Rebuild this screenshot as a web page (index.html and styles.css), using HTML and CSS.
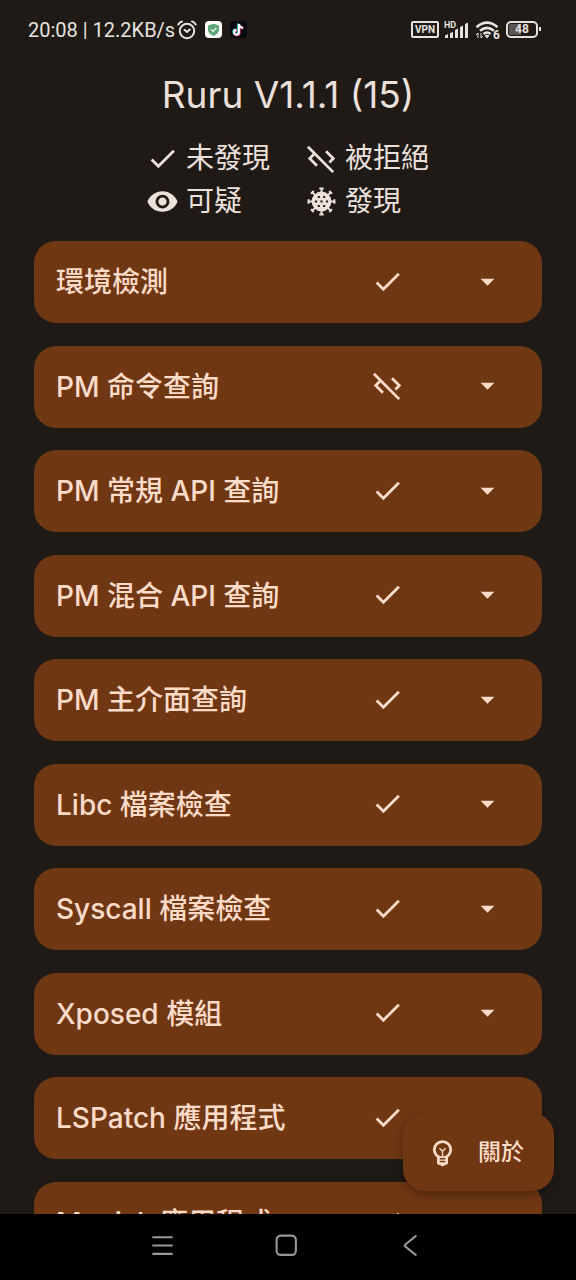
FILE: index.html
```html
<!DOCTYPE html>
<html lang="zh-Hant">
<head>
<meta charset="utf-8">
<meta name="viewport" content="width=device-width, initial-scale=1">
<title>Ruru</title>
<link rel="stylesheet" href="styles.css">
</head>
<body>
<svg class="sprite" aria-hidden="true">
  <symbol id="check" viewBox="0 0 24 24"><path d="M9 16.17 4.83 12l-1.42 1.41L9 19 21 7l-1.41-1.41z"/></symbol>
  <symbol id="code-off" viewBox="0 0 24 24"><path d="M19.17 12l-4.58-4.59L16 6l6 6-3.59 3.59L17 14.17zM1.39 4.22l4.19 4.19L2 12l6 6 1.41-1.41L4.83 12 7 9.83l12.78 12.78 1.41-1.41L2.81 2.81z"/></symbol>
  <symbol id="eye" viewBox="0 0 24 24"><path d="M12 4.5C7 4.5 2.73 7.61 1 12c1.73 4.39 6 7.5 11 7.5s9.27-3.11 11-7.5c-1.73-4.39-6-7.5-11-7.5zM12 17c-2.76 0-5-2.24-5-5s2.24-5 5-5 5 2.24 5 5-2.24 5-5 5zm0-8c-1.66 0-3 1.34-3 3s1.34 3 3 3 3-1.34 3-3-1.34-3-3-3z"/></symbol>
  <symbol id="virus" viewBox="0 0 24 24">
    <g fill="none" stroke="currentColor" stroke-width="1.5">
      <path d="M12 7V2.6M10.4 2.6h3.2M12 17v4.4M10.4 21.4h3.2M7 12H2.6M2.6 10.4v3.2M17 12h4.4M21.4 10.4v3.2"/>
      <path d="M12 7V2.6M10.6 2.6h2.8M12 17v4.4M10.6 21.4h2.8M7 12H2.6M2.6 10.6v2.8M17 12h4.4M21.4 10.6v2.8" transform="rotate(45 12 12)"/>
    </g>
    <path fill-rule="evenodd" d="M12 4.8a7.2 7.2 0 1 0 0 14.4a7.2 7.2 0 0 0 0-14.4zM9.3 8h1.500v1.500H9.300zM13.200 8h1.500v1.500h-1.500zM7.200 11.200h1.600v1.600H7.200zM11.200 11.200h1.600v1.600h-1.600zM15.200 11.200h1.600v1.600h-1.600zM9.300 14.500h1.500V16H9.300zM13.200 14.500h1.500V16h-1.500z"/>
  </symbol>
  <symbol id="arrow" viewBox="0 0 24 24"><path d="m7 10 5 5 5-5z"/></symbol>
</svg>
<div class="screen">
  <header class="status">
    <span class="status-text">20:08 | 12.2KB/s</span>
    <svg class="ic-alarm" viewBox="0 0 20 20" fill="none" stroke="currentColor" stroke-width="2" stroke-linecap="round"><circle cx="10" cy="11" r="7.200"/><path d="M1.300 4.500Q2.500 2 5 1.500M18.700 4.500Q17.500 2 15 1.500M7.500 9.800 10 12l2.800-2.500"/></svg>
    <svg class="ic-app" viewBox="0 0 17 17"><rect width="17" height="17" rx="4" fill="#fff"/><path d="M8.500 2.800 14 4.500v4q0 4-5.500 6.500Q3 12.500 3 8.500v-4z" fill="#5fa777"/><path d="m6 8.300 2 2 3.300-3.500" fill="none" stroke="#fff" stroke-width="1.200"/></svg>
    <svg class="ic-app" viewBox="0 0 17 17"><rect width="17" height="17" rx="4" fill="#080a12"/><g fill="none" stroke-width="2"><path d="M8.200 2.500v8.300a2.400 2.400 0 1 1-2.400-2.400M8.200 3q.8 3.200 4 3.300" stroke="#35dbe0"/><path d="M9.600 3.500v8.300a2.400 2.400 0 1 1-2.400-2.400M9.600 4q.8 3.200 4 3.300" stroke="#f03565"/><path d="M8.900 3v8.300a2.400 2.400 0 1 1-2.400-2.400M8.900 3.500q.8 3.200 4 3.300" stroke="#fff"/></g></svg>
    <div class="status-right">
      <span class="vpn">VPN</span>
      <svg class="ic-signal" viewBox="0 0 26 20" fill="currentColor"><text class="tag" x="0" y="8">HD</text><path d="M1 15.500l3-1.500v4H1zM6 13l3-1v6H6zM11 10l3-1.500V18h-3zM16 7l3-1.500V18h-3zM21 4l3-1.500V18h-3z"/></svg>
      <svg class="ic-wifi" viewBox="0 0 26 20" fill="none" stroke="currentColor" stroke-width="2.600"><path d="M1.500 7.200Q12 -1.800 22.500 7.200M5 10.800q7-6 14 0M8.500 14q3.500-3 7 0"/><path d="m12 18.500-2.500-3q2.500-1.600 5 0z" fill="currentColor" stroke="none"/><path d="M3 13v5M1 15l2-2M6 18v-5M8 16l-2 2" stroke-width="1"/><text class="six" x="18" y="19" fill="currentColor" stroke="none">6</text></svg>
      <span class="battery"><span class="battery-level">48</span></span>
    </div>
  </header>
  <main class="content">
    <h1 class="title">Ruru V1.1.1 (15)</h1>
    <ul class="legend">
      <li class="legend-item"><svg class="icon"><use href="#check"/></svg>未發現</li>
      <li class="legend-item"><svg class="icon"><use href="#code-off"/></svg>被拒絕</li>
      <li class="legend-item"><svg class="icon"><use href="#eye"/></svg>可疑</li>
      <li class="legend-item"><svg class="icon"><use href="#virus"/></svg>發現</li>
    </ul>
    <div class="list">
      <button class="card"><span>環境檢測</span><svg class="icon"><use href="#check"/></svg><svg class="icon"><use href="#arrow"/></svg></button>
      <button class="card"><span>PM 命令查詢</span><svg class="icon"><use href="#code-off"/></svg><svg class="icon"><use href="#arrow"/></svg></button>
      <button class="card"><span>PM 常規 API 查詢</span><svg class="icon"><use href="#check"/></svg><svg class="icon"><use href="#arrow"/></svg></button>
      <button class="card"><span>PM 混合 API 查詢</span><svg class="icon"><use href="#check"/></svg><svg class="icon"><use href="#arrow"/></svg></button>
      <button class="card"><span>PM 主介面查詢</span><svg class="icon"><use href="#check"/></svg><svg class="icon"><use href="#arrow"/></svg></button>
      <button class="card"><span>Libc 檔案檢查</span><svg class="icon"><use href="#check"/></svg><svg class="icon"><use href="#arrow"/></svg></button>
      <button class="card"><span>Syscall 檔案檢查</span><svg class="icon"><use href="#check"/></svg><svg class="icon"><use href="#arrow"/></svg></button>
      <button class="card"><span>Xposed 模組</span><svg class="icon"><use href="#check"/></svg><svg class="icon"><use href="#arrow"/></svg></button>
      <button class="card"><span>LSPatch 應用程式</span><svg class="icon"><use href="#check"/></svg></button>
      <button class="card"><span>Magisk 應用程式</span><svg class="icon"><use href="#check"/></svg></button>
    </div>
    <button class="fab">
      <svg class="icon" viewBox="0 0 24 24"><circle cx="12" cy="10" r="6" fill="none" stroke="currentColor" stroke-width="2"/><path d="M8 15h8v4a2 2 0 0 1-2 2h-.280a2 2 0 0 1-3.440 0H10a2 2 0 0 1-2-2z"/><path class="bulb-gap" d="M10 16h4v1h-4zM10 18h4v1h-4z"/><path d="M12 15v-4.200M9.800 8.900l2.200 2.200 2.200-2.200" fill="none" stroke="currentColor"/></svg>
      <span>關於</span>
    </button>
  </main>
  <nav class="nav">
    <button class="nav-button" aria-label="選單"><svg class="nav-icon" viewBox="0 0 24 24"><path d="M3 4h18M3 12h18M3 20h18"/></svg></button>
    <button class="nav-button" aria-label="主畫面"><svg class="nav-icon" viewBox="0 0 24 24"><rect x="2.500" y="2.500" width="18.500" height="18.500" rx="4"/></svg></button>
    <button class="nav-button" aria-label="返回"><svg class="nav-icon" viewBox="0 0 24 24"><path d="m17 3-10 8q-1.200 1 0 2l10 8"/></svg></button>
  </nav>
</div>
</body>
</html>
```
FILE: styles.css
```css
* { box-sizing: border-box; }
body {
  margin: 0;
  background: #201a17;
  color: #ece0db;
  font-family: Inter, "Noto Sans CJK TC", sans-serif;
}
button {
  border: 0;
  font: inherit;
  cursor: pointer;
}
.sprite { display: none; }
.screen {
  display: flex;
  flex-direction: column;
  height: 100vh;
}
.icon {
  width: 33px;
  height: 33px;
  flex: none;
  fill: currentColor;
}

.status {
  flex: none;
  display: flex;
  align-items: center;
  height: 59px;
  padding: 0 38px 0 28px;
  color: #e6e2df;
}
.status-text {
  font-family: Roboto, sans-serif;
  font-size: 20px;
}
.ic-alarm {
  width: 20px;
  height: 20px;
  margin: 0 8px 0 2px;
}
.ic-app {
  width: 17px;
  height: 17px;
  margin-right: 8px;
}
.status-right {
  display: flex;
  align-items: center;
  gap: 5px;
  margin-left: auto;
}
.vpn {
  padding: 0 2px;
  border: 2px solid;
  border-radius: 2px;
  font: bold 10px/13px Roboto, sans-serif;
}
.ic-signal, .ic-wifi {
  width: 26px;
  height: 20px;
  overflow: visible;
}
.tag { font: bold 9px Roboto, sans-serif; }
.six { font: bold 12px Roboto, sans-serif; }
.battery {
  position: relative;
  width: 32px;
  padding: 1px;
  border: 2px solid;
  border-radius: 5px;
}
.battery::after {
  content: "";
  position: absolute;
  top: 4px;
  right: -5px;
  width: 2px;
  height: 4px;
  background: currentColor;
}
.battery-level {
  display: block;
  border-radius: 2px;
  background: linear-gradient(90deg, #5a5653 48%, transparent 48%);
  font: bold 12px/11px Roboto, sans-serif;
  text-align: center;
}

.content {
  position: relative;
  flex: 1;
  min-height: 0;
  overflow: hidden;
  padding: 10px 34px 0;
}
.title {
  margin: 0 0 16px;
  font-size: 37px;
  font-weight: 400;
  line-height: 52px;
  text-align: center;
}
.legend {
  display: grid;
  grid-template-columns: 122px 125px;
  column-gap: 37px;
  justify-content: center;
  margin: 0 0 18px;
  padding: 0;
  list-style: none;
  font-size: 28px;
  line-height: 43px;
}
.legend-item {
  display: flex;
  align-items: center;
  gap: 7px;
  white-space: nowrap;
}
.list {
  display: flex;
  flex-direction: column;
  justify-content: space-between;
  min-height: calc(80vh - 1px);
}
.card {
  flex: none;
  display: grid;
  grid-template-columns: 1fr 100px 100px;
  align-items: center;
  justify-items: center;
  padding: 20px 5px 20px 22px;
  border-radius: 22px;
  background: #703713;
  color: #ffdbc9;
  font-size: 28px;
  font-weight: 500;
  line-height: 42px;
}
.card span {
  justify-self: start;
  white-space: nowrap;
}
.card .icon { margin-bottom: 2px; }
.fab {
  position: absolute;
  right: 22px;
  bottom: 23px;
  display: flex;
  align-items: center;
  gap: 19px;
  padding: 18px 30px 18px 23px;
  border-radius: 22px;
  background: #703713;
  box-shadow: 0 4px 10px rgba(0, 0, 0, 0.3);
  color: #ffdbc9;
  font-size: 23px;
  font-weight: 500;
  line-height: 42px;
}
.bulb-gap { fill: #703713; }

.nav {
  flex: none;
  display: flex;
  justify-content: center;
  height: 66px;
  padding: 0 4px 0 0;
  background: #000;
}
.nav-button {
  width: 124px;
  padding: 0;
  background: none;
  color: #999;
}
.nav-icon {
  width: 25px;
  height: 25px;
  fill: none;
  stroke: currentColor;
  stroke-width: 2;
  stroke-linecap: round;
}
```
